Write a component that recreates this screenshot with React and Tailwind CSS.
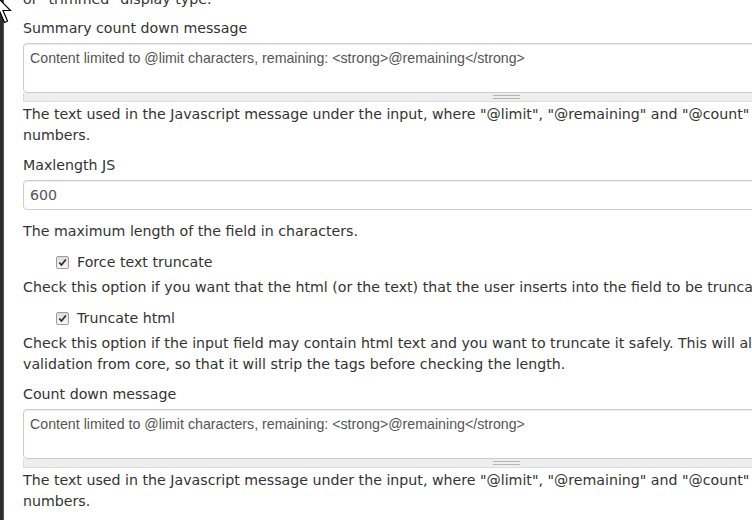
import React from 'react'

const message = 'Content limited to @limit characters, remaining: <strong>@remaining</strong>'

const CheckMark = () => (
  <span className="inline-flex h-[13px] w-[13px] shrink-0 items-center justify-center rounded-[2px] border border-[#9c9c9c] bg-linear-to-b from-[#dcdcdc] to-[#f7f7f7]">
    <svg width="9" height="9" viewBox="0 0 9 9">
      <path d="M1.3 4.6 L3.5 7 L7.8 1.5" fill="none" stroke="#2a2a2a" strokeWidth="1.7" />
    </svg>
  </span>
)

const Grippie = () => (
  <div className="flex h-[9px] items-center justify-center border-x border-b border-[#dddddd] bg-[#eeeeee]">
    <div className="h-[4px] w-[27px] border-y border-[#b5b5b5]"></div>
  </div>
)

const TextareaField = ({ label, className }) => (
  <div className={className}>
    <label className="mb-[4px] block">{label}</label>
    <textarea
      readOnly
      value={message}
      className="block h-[50px] w-full resize-none rounded-[4px] border border-[#cccccc] bg-white px-[6px] py-[4px] text-[14.2px] leading-[20px] text-[#555555] shadow-[inset_0_1px_1px_rgba(0,0,0,0.075)] outline-none [font-family:'Liberation_Sans',Arial,sans-serif]"
    />
    <Grippie />
    <p className="mt-[2px]">
      The text used in the Javascript message under the input, where "@limit", "@remaining" and "@count" are replaced by the appropriate numbers.
    </p>
  </div>
)

const Cursor = () => (
  <svg className="pointer-events-none absolute left-0 top-0" width="20" height="26" viewBox="0 0 20 26">
    <path
      d="M-6 -6 L-6 18 L0 12 L4.5 22.5 L7.5 21 L3 10.5 L10.5 10.5 Z"
      fill="#ffffff"
      stroke="#000000"
      strokeWidth="1.2"
      strokeLinejoin="miter"
    />
  </svg>
)

const App = () => {
  return (
    <div className="relative flex h-[520px] w-[752px] overflow-hidden bg-white text-[14.2px] leading-[21px] text-[#333333] [font-family:'DejaVu_Sans',Verdana,sans-serif]">
      {/* window edge */}
      <div className="w-[4px] shrink-0 bg-[#2d2d2d] border-r border-[#555555]"></div>

      <div className="w-[992px] shrink-0 pl-[19px]">
        <div className="-mt-[11px] w-[966px]">
          <p>or "trimmed" display type.</p>

          <TextareaField label="Summary count down message" className="mt-[8px]" />

          {/* Maxlength */}
          <div className="mt-[9px]">
            <label className="mb-[4px] block">Maxlength JS</label>
            <input
              readOnly
              value="600"
              className="block h-[30px] w-full rounded-[4px] border border-[#cccccc] bg-white px-[6px] py-[4px] leading-[20px] text-[#555555] shadow-[inset_0_1px_1px_rgba(0,0,0,0.075)] outline-none"
            />
            <p className="mt-[11px]">The maximum length of the field in characters.</p>
          </div>

          {/* Force text truncate */}
          <div className="mt-[10px]">
            <div className="flex items-center gap-[8px] pl-[33px]">
              <CheckMark />
              <span>Force text truncate</span>
            </div>
            <p className="mt-[4px]">
              Check this option if you want that the html (or the text) that the user inserts into the field to be truncated.
            </p>
          </div>

          {/* Truncate html */}
          <div className="mt-[10px]">
            <div className="flex items-center gap-[8px] pl-[33px]">
              <CheckMark />
              <span>Truncate html</span>
            </div>
            <p className="mt-[4px]">
              Check this option if the input field may contain html text and you want to truncate it safely. This will also overrride the maxlength validation from core, so that it will strip the tags before checking the length.
            </p>
          </div>

          <TextareaField label="Count down message" className="mt-[9px]" />
        </div>
      </div>

      <Cursor />
    </div>
  )
}

export default App
